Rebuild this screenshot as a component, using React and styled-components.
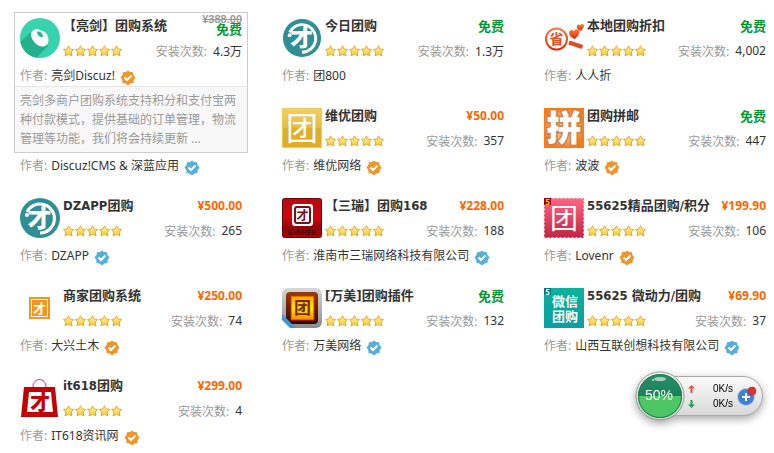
import React from 'react';
import styled, { createGlobalStyle } from 'styled-components';

const cjk = '"Noto Sans CJK SC", sans-serif';

const GlobalStyle = createGlobalStyle`
  * {
    box-sizing: border-box;
  }

  body {
    margin: 0;
    background: #fff;
    color: #333;
    font-family: "Noto Sans", ${cjk};
    font-size: 12px;
  }

  a {
    color: inherit;
    text-decoration: none;
  }
`;

const Page = styled.main`
  position: relative;
  padding: 12px 2px 0 14px;
`;

const AppGrid = styled.ul`
  display: grid;
  grid-template-columns: repeat(3, minmax(0, 1fr));
  gap: 15px 28px;
  margin: 0;
  padding: 0;
  list-style: none;
`;

const Card = styled.li`
  position: relative;
  display: flex;
  flex-direction: column;
  justify-content: flex-end;
  gap: 6px;
  padding: 5px 5px 0;
  border: 1px solid ${props => props.$open ? '#ccc' : 'transparent'};
`;

const Head = styled.div`
  display: flex;
  gap: 3px;
  height: 42px;
`;

const Logo = styled.svg`
  flex: none;
  width: 40px;
  height: 40px;
  overflow: visible;
  font-family: ${cjk};
`;

const Info = styled.div`
  flex: 1;
  min-width: 0;
  display: flex;
  flex-direction: column;
  gap: 8px;
`;

const Line = styled.div`
  display: flex;
  justify-content: space-between;
  align-items: ${props => props.$top ? 'flex-start' : 'center'};
  height: ${props => props.$top ? '16px' : '18px'};
  white-space: nowrap;
`;

const Title = styled.a`
  font-family: "DejaVu Sans Condensed", ${cjk};
  font-size: 13px;
  font-weight: bold;
  line-height: 16px;
`;

const Price = styled.div`
  display: flex;
  flex-direction: column;
  align-items: flex-end;
  color: ${props => props.$free ? '#093' : '#f60'};
  font-size: ${props => props.$free ? '13px' : '12px'};
  font-weight: bold;
  line-height: 16px;
`;

const OldPrice = styled.del`
  height: 3px;
  color: #999;
  font-family: "Liberation Sans", sans-serif;
  font-size: 11px;
  line-height: 3px;
`;

const Muted = styled.span`
  color: #999;
`;

const Installs = styled.span`
  display: flex;
  gap: 6px;
`;

const Stars = styled.svg`
  width: 60px;
  height: 12px;
`;

const Author = styled.div`
  display: flex;
  align-items: center;
  gap: 4px;
  height: 20px;
  line-height: 20px;
  white-space: nowrap;
`;

const Badge = styled.svg`
  align-self: flex-end;
  width: 16px;
  height: 16px;
  margin-left: 1px;
`;

const Description = styled.p`
  position: absolute;
  z-index: 1;
  top: 100%;
  left: -1px;
  right: -1px;
  margin: 0;
  padding: 4px 5px;
  border: 1px solid #ccc;
  border-top-color: #e5e5e5;
  background: #f8f8f8;
  color: #999;
  line-height: 19px;
`;

const Monitor = styled.aside`
  position: absolute;
  top: 371px;
  right: 11px;
  display: flex;
  align-items: center;
  filter: drop-shadow(0 3px 4px rgba(0, 0, 0, 0.35));
`;

const Ball = styled.svg`
  position: relative;
  z-index: 1;
  width: 50px;
  height: 50px;
  font-family: "Liberation Sans", sans-serif;
`;

const Pill = styled.div`
  display: flex;
  align-items: center;
  gap: 4px;
  width: 102px;
  height: 40px;
  margin-left: -24px;
  padding: 0 5px 0 26px;
  border: 1px solid #aaa;
  border-radius: 0 20px 20px 0;
  background: linear-gradient(#fafafa, #d9d9d9);
`;

const Speeds = styled.div`
  flex: 1;
`;

const Speed = styled.div`
  display: flex;
  align-items: center;
  justify-content: space-between;
  height: 15px;
  color: #000;
  font-family: "Liberation Sans", sans-serif;
  font-size: 10px;
`;

const Arrow = styled.svg`
  width: 7px;
  height: 8px;
`;

const PlusButton = styled.button`
  width: 20px;
  height: 20px;
  padding: 0;
  border: 0;
  background: none;
  cursor: pointer;

  svg {
    display: block;
  }
`;

const LiangjianLogo = () => (
  <Logo viewBox="0 0 40 40">
    <defs>
      <clipPath id="lj"><circle cx="20" cy="20" r="20" /></clipPath>
    </defs>
    <circle cx="20" cy="20" r="20" fill="#35d3ae" />
    <path d="M11 14 L-8 32 V44 H12 L28 28 Z" fill="#24b08d" clipPath="url(#lj)" />
    <path d="M15 11.500 C17 10.500 19 11.500 20.500 12.500 C25 12.500 28.500 17 28.500 22 C28.500 26 26 28.500 22.500 28.500 C17 28.500 11.500 22.500 11 17 C11 13.500 12.500 12 15 11.500 Z" fill="#fff" />
    <path d="M17 13.500 C20 13 23 15 23 19 C19.500 19.500 17 17 17 13.500 Z" fill="#29b994" />
  </Logo>
);

const RingLogo = ({ inset = 0 }) => (
  <Logo viewBox={`${-inset} ${-inset} ${40 + inset * 2} ${40 + inset * 2}`}>
    <circle cx="20" cy="20" r="20" fill="#2f8f94" />
    <path d="M7 14 A14.500 14.500 0 1 1 20 35" fill="none" stroke="#fff" strokeWidth="3" />
    <circle cx="7" cy="17" r="2" fill="#fff" />
    <text x="19.500" y="28.500" textAnchor="middle" fontSize="24" fontWeight="900" fill="#fff">才</text>
  </Logo>
);

const SaveLogo = () => (
  <Logo viewBox="0 0 40 40">
    <defs>
      <linearGradient id="sv" x2="0" y2="1">
        <stop stopColor="#ff7a3c" />
        <stop offset="1" stopColor="#d92f0c" />
      </linearGradient>
    </defs>
    <circle cx="12.500" cy="21" r="10.500" fill="#fff" stroke="url(#sv)" strokeWidth="2" />
    <text x="12.500" y="26" textAnchor="middle" fontSize="14" fontWeight="bold" fill="#e8491a">省</text>
    <path d="M25 24.500 L38.500 29" stroke="#dc4a22" strokeWidth="4" />
    <path d="M31 21 C28 20.500 25 17.500 25 14.500 C25 11.500 29 11 30 13.500 C31 9.500 36 11.500 35.500 14.500 C35 17 33 19 31 21 Z" fill="url(#sv)" />
    <path d="M37 13 C34 12 32 10 33 7.500 C34 6 36 6.500 36 8 C37 5 40 6 40 8 C40 10 38 11 37 13 Z" fill="url(#sv)" />
  </Logo>
);

const YellowLogo = () => (
  <Logo viewBox="0 0 40 40">
    <defs>
      <linearGradient id="yl" x2="0" y2="1">
        <stop stopColor="#f2cf62" />
        <stop offset=".5" stopColor="#e6bb3c" />
        <stop offset=".5" stopColor="#dfae29" />
        <stop offset="1" stopColor="#e2ad22" />
      </linearGradient>
    </defs>
    <rect x=".5" y=".5" width="39" height="39" fill="url(#yl)" stroke="#eccb58" />
    <text x="20" y="32" textAnchor="middle" fontSize="32" fill="#fff">团</text>
  </Logo>
);

const PinLogo = () => (
  <Logo viewBox="0 0 40 40">
    <defs>
      <radialGradient id="pn">
        <stop stopColor="#ffd0a0" />
        <stop offset=".6" stopColor="#f9ae72" />
        <stop offset="1" stopColor="#fa7a18" />
      </radialGradient>
    </defs>
    <rect width="40" height="40" fill="url(#pn)" />
    <text x="20" y="33" textAnchor="middle" fontSize="35" fontWeight="900" fill="#fff" stroke="#c5834f" strokeWidth="3" paintOrder="stroke">拼</text>
  </Logo>
);

const SanreeLogo = () => (
  <Logo viewBox="0 0 40 40">
    <defs>
      <linearGradient id="sr" x2="0" y2="1">
        <stop stopColor="#b30c12" />
        <stop offset=".5" stopColor="#d0060b" />
        <stop offset=".75" stopColor="#900407" />
        <stop offset="1" stopColor="#b00307" />
      </linearGradient>
    </defs>
    <rect x=".5" y=".5" width="39" height="39" rx="2" fill="url(#sr)" stroke="#6d0508" />
    <rect x="10" y="6" width="21" height="22" rx="3" fill="#fff" />
    <rect x="13" y="9" width="15" height="16" rx="2" fill="none" stroke="#7c0d12" strokeWidth="2" />
    <text x="20.500" y="21.500" textAnchor="middle" fontSize="12" fontWeight="bold" fill="#7c0d12">才</text>
    <text x="20" y="37" textAnchor="middle" fontSize="7" fontFamily="Liberation Sans" fill="#2a0000">SANREE</text>
  </Logo>
);

const PinkLogo = () => (
  <Logo viewBox="0 0 40 40">
    <defs>
      <linearGradient id="pk" x2="0" y2="1">
        <stop stopColor="#ff6684" />
        <stop offset="1" stopColor="#c12544" />
      </linearGradient>
    </defs>
    <rect width="40" height="40" fill="url(#pk)" />
    <rect x=".5" y=".5" width="39" height="39" fill="none" stroke="#ffc4cf" strokeDasharray="2 2" />
    <rect width="7" height="7" fill="#a00016" />
    <text x="3.500" y="6.500" textAnchor="middle" fontSize="8" fontWeight="bold" fill="#ffd51c">5</text>
    <text x="20" y="31" textAnchor="middle" fontSize="28" fill="#fff">团</text>
  </Logo>
);

const OrangeLogo = () => (
  <Logo viewBox="0 0 40 40">
    <rect x="9" y="9" width="21" height="22" fill="#f7941e" />
    <rect x="11.500" y="11.500" width="16" height="17" fill="none" stroke="#fff" strokeWidth="1" />
    <text x="19.500" y="25" textAnchor="middle" fontSize="13" fontWeight="bold" fill="#fff">才</text>
  </Logo>
);

const WanmeiLogo = () => (
  <Logo viewBox="0 0 40 40">
    <defs>
      <linearGradient id="wm" x2="0" y2="1">
        <stop stopColor="#d5d8da" />
        <stop offset="1" stopColor="#888c90" />
      </linearGradient>
      <linearGradient id="wi" x2="0" y2="1">
        <stop stopColor="#9a3a08" />
        <stop offset="1" stopColor="#2a0a02" />
      </linearGradient>
      <linearGradient id="wy" x2="0" y2="1">
        <stop stopColor="#ffa800" />
        <stop offset=".5" stopColor="#ffe800" />
        <stop offset="1" stopColor="#ff8a00" />
      </linearGradient>
    </defs>
    <rect width="40" height="40" rx="6" fill="url(#wm)" />
    <rect x="4" y="4" width="32" height="32" rx="4" fill="url(#wi)" />
    <rect x="9" y="8" width="23" height="24" fill="url(#wy)" stroke="#e02a00" />
    <text x="20.500" y="26" textAnchor="middle" fontSize="17" fontWeight="bold" fill="#7b2a00">团</text>
    <path d="M0 27 L13 40 H0 Z" fill="#fff" />
    <path d="M0 26 L14 40 H8 L0 32 Z" fill="#3f96d8" />
  </Logo>
);

const WechatLogo = () => (
  <Logo viewBox="0 0 40 40">
    <defs>
      <linearGradient id="wc" x2="0" y2="1">
        <stop stopColor="#0bb39a" />
        <stop offset="1" stopColor="#0a9da6" />
      </linearGradient>
    </defs>
    <rect width="40" height="40" fill="url(#wc)" />
    <rect width="7" height="7" fill="#05767c" />
    <text x="3.500" y="6.500" textAnchor="middle" fontSize="8" fontWeight="bold" fill="#fff">5</text>
    <text x="21" y="18" textAnchor="middle" fontSize="13" fontWeight="bold" fill="#fff">微信</text>
    <text x="21" y="33" textAnchor="middle" fontSize="13" fontWeight="bold" fill="#fff">团购</text>
  </Logo>
);

const BagLogo = () => (
  <Logo viewBox="0 0 40 40">
    <path d="M13 9 C13 -1 26 -1 26 9" fill="none" stroke="#dd2a62" strokeWidth="1" />
    <path d="M4 9 H35 L38 39 H1 Z" fill="#c40000" />
    <path d="M9 14 H31 L33 34 H7 Z" fill="#fff" />
    <text x="20" y="31.500" textAnchor="middle" fontSize="20" fontWeight="900" fill="#c40000">才</text>
  </Logo>
);

const apps = [
  {
    title: '【亮剑】团购系统', logo: <LiangjianLogo />, oldPrice: '¥388.00', installs: '4.3万', author: '亮剑Discuz!', badge: 'orange',
    description: '亮剑多商户团购系统支持积分和支付宝两种付款模式，提供基础的订单管理，物流管理等功能，我们将会持续更新 ...',
  },
  { title: '今日团购', logo: <RingLogo inset={1} />, installs: '1.3万', author: '团800' },
  { title: '本地团购折扣', logo: <SaveLogo />, installs: '4,002', author: '人人折' },
  { author: 'Discuz!CMS & 深蓝应用', badge: 'blue' },
  { title: '维优团购', logo: <YellowLogo />, price: '¥50.00', installs: '357', author: '维优网络', badge: 'orange' },
  { title: '团购拼邮', logo: <PinLogo />, installs: '447', author: '波波', badge: 'orange' },
  { title: 'DZAPP团购', logo: <RingLogo />, price: '¥500.00', installs: '265', author: 'DZAPP', badge: 'blue' },
  { title: '【三瑞】团购168', logo: <SanreeLogo />, price: '¥228.00', installs: '188', author: '淮南市三瑞网络科技有限公司', badge: 'blue' },
  { title: '55625精品团购/积分', logo: <PinkLogo />, price: '¥199.90', installs: '106', author: 'Lovenr', badge: 'orange' },
  { title: '商家团购系统', logo: <OrangeLogo />, price: '¥250.00', installs: '74', author: '大兴土木', badge: 'orange' },
  { title: '[万美]团购插件', logo: <WanmeiLogo />, installs: '132', author: '万美网络', badge: 'blue' },
  { title: '55625 微动力/团购', logo: <WechatLogo />, price: '¥69.90', installs: '37', author: '山西互联创想科技有限公司', badge: 'blue' },
  { title: 'it618团购', logo: <BagLogo />, price: '¥299.00', installs: '4', author: 'IT618资讯网', badge: 'orange' },
];

const Rating = () => (
  <Stars viewBox="0 0 60 12" role="img" aria-label="5">
    <defs>
      <linearGradient id="star" x2="0" y2="1">
        <stop stopColor="#fff9b0" />
        <stop offset="1" stopColor="#fdc922" />
      </linearGradient>
    </defs>
    {[0, 12, 24, 36, 48].map(x => (
      <path
        key={x}
        transform={`translate(${x} 0)`}
        d="M5.500 .8 L7 4 L10.500 4.400 L8.200 7 L9 10.800 L5.500 9.300 L2 10.800 L2.800 7 L.5 4.400 L4 4 Z"
        fill="url(#star)"
        stroke="#e0a030"
        strokeWidth=".9"
        strokeLinejoin="round"
      />
    ))}
  </Stars>
);

const VerifiedBadge = ({ color }) => (
  <Badge viewBox="0 0 16 16">
    <path
      d="M8 .5 L10 2 L13 2.200 L13.400 5 L15.500 7.500 L13.700 10 L13.500 13 L10.500 13.500 L8 15.500 L5.500 13.500 L2.500 13 L2.300 10 L.5 7.500 L2.500 5 L3 2.200 L6 2 Z"
      fill={color === 'blue' ? '#55afd9' : '#ed962d'}
    />
    <path d="M4.500 7.500 L7 10 L11.500 5.500" fill="none" stroke="#fff" strokeWidth="2" />
  </Badge>
);

const AppCard = ({ app }) => (
  <Card $open={Boolean(app.description)}>
    <Head>
      {app.logo}
      {app.title && (
        <Info>
          <Line $top>
            <Title href="#">{app.title}</Title>
            <Price $free={!app.price}>
              {app.oldPrice && <OldPrice>{app.oldPrice}</OldPrice>}
              <span>{app.price || '免费'}</span>
            </Price>
          </Line>
          <Line>
            <Rating />
            <Installs>
              <Muted>安装次数:</Muted>
              <span>{app.installs}</span>
            </Installs>
          </Line>
        </Info>
      )}
    </Head>
    <Author>
      <Muted>作者:</Muted>
      <a href="#">{app.author}</a>
      {app.badge && <VerifiedBadge color={app.badge} />}
    </Author>
    {app.description && <Description>{app.description}</Description>}
  </Card>
);

const SpeedMonitor = () => (
  <Monitor>
    <Ball viewBox="0 0 50 50">
      <defs>
        <linearGradient id="ballTop" x2="0" y2="1">
          <stop stopColor="#2b9069" />
          <stop offset="1" stopColor="#08704a" />
        </linearGradient>
        <linearGradient id="rim" x2="0" y2="1">
          <stop stopColor="#fff" />
          <stop offset="1" stopColor="#ccc" />
        </linearGradient>
      </defs>
      <circle cx="25" cy="25" r="24" fill="url(#rim)" stroke="#999" />
      <circle cx="25" cy="25" r="22" fill="url(#ballTop)" />
      <path d="M3 25 A22 22 0 0 0 47 25 Z" fill="#4cc764" />
      <circle cx="25" cy="25" r="21.500" fill="none" stroke="#1c7f50" />
      <ellipse cx="25" cy="8" rx="6" ry="2" fill="#fff" opacity=".6" />
      <circle cx="18" cy="9" r="1" fill="#fff" opacity=".7" />
      <text x="24" y="29" textAnchor="middle" fontSize="14" fill="#fff">50%</text>
    </Ball>
    <Pill>
      <Speeds>
        <Speed>
          <Arrow viewBox="0 0 7 8"><path d="M3.500 0 L7 3.500 H4.500 V8 H2.500 V3.500 H0 Z" fill="#e8533f" /></Arrow>
          <span>0K/s</span>
        </Speed>
        <Speed>
          <Arrow viewBox="0 0 7 8"><path d="M3.500 8 L7 4.500 H4.500 V0 H2.500 V4.500 H0 Z" fill="#1f9d55" /></Arrow>
          <span>0K/s</span>
        </Speed>
      </Speeds>
      <PlusButton type="button" aria-label="+">
        <svg width="20" height="20" viewBox="0 0 20 20">
          <circle cx="9" cy="11" r="8.500" fill="#3b82d8" stroke="#c5cbd3" />
          <path d="M9 7 V15 M5 11 H13" stroke="#fff" strokeWidth="2" />
          <circle cx="15" cy="5" r="4" fill="#dc3232" stroke="#b01c1c" strokeWidth=".5" />
        </svg>
      </PlusButton>
    </Pill>
  </Monitor>
);

const App = () => (
  <Page>
    <GlobalStyle />
    <AppGrid>
      {apps.map(app => <AppCard key={app.author} app={app} />)}
    </AppGrid>
    <SpeedMonitor />
  </Page>
);

export default App;
